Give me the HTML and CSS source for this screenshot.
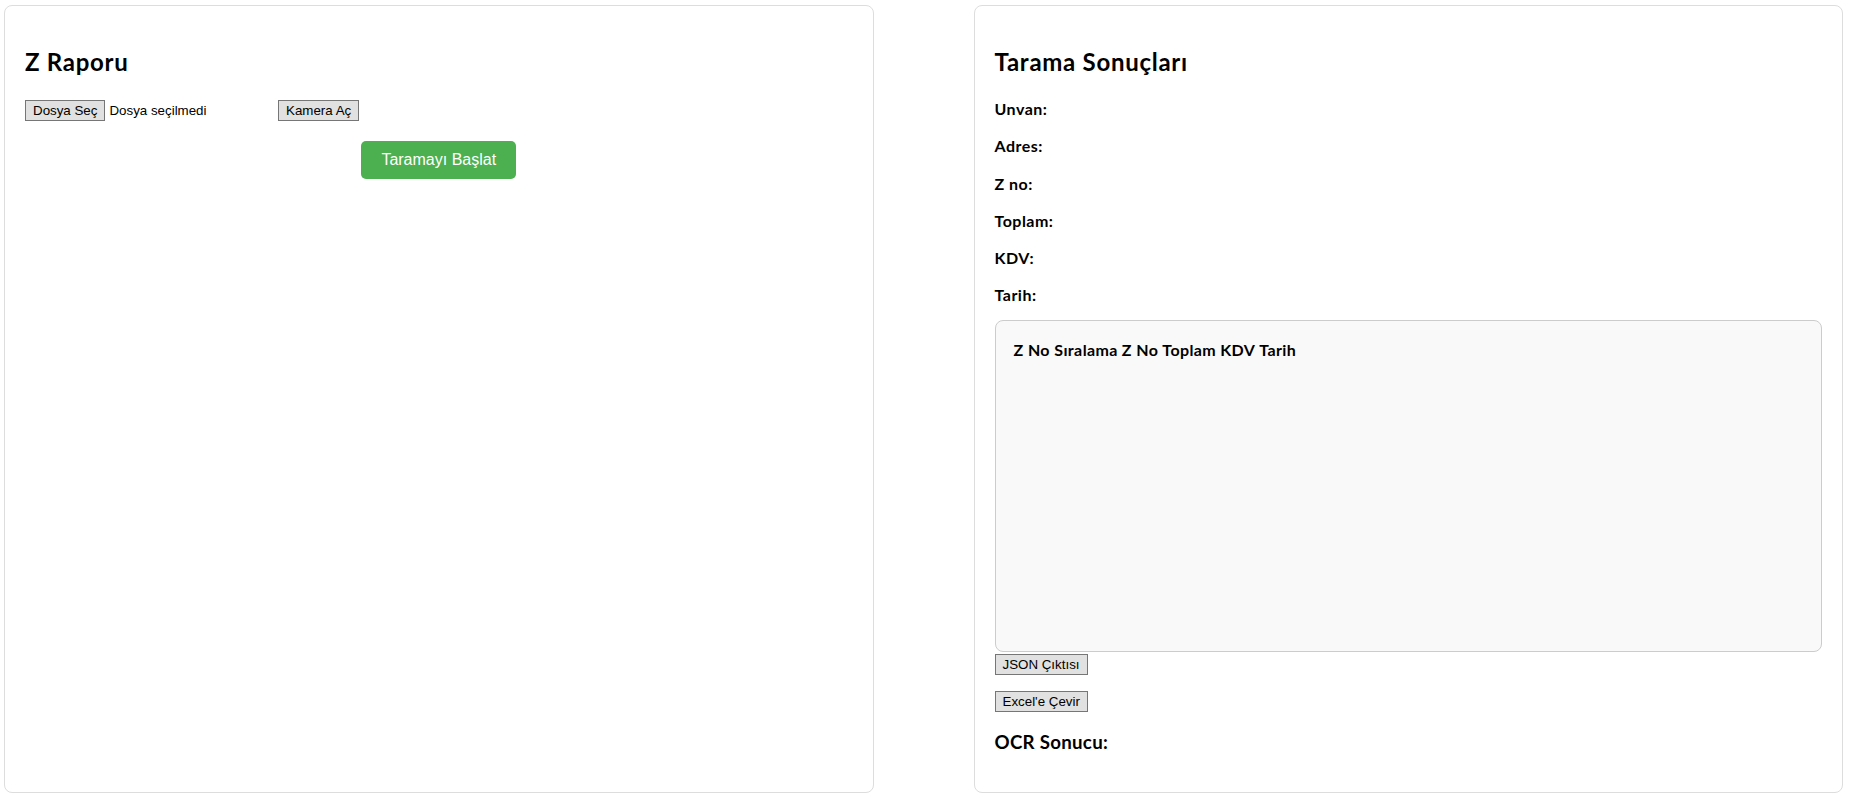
FILE: index.html
```html
<!DOCTYPE html>
<html lang="tr">
<head>
<meta charset="utf-8">
<title>Z Raporu</title>
<link rel="stylesheet" href="styles.css">
</head>
<body>
<div class="page">
  <section class="card">
    <h2 class="card-title">Z Raporu</h2>
    <div class="controls">
      <span class="file-input">
        <button class="sys-btn" type="button">Dosya Seç</button>
        <span class="file-name">Dosya seçilmedi</span>
      </span>
      <button class="sys-btn" type="button">Kamera Aç</button>
    </div>
    <button class="primary-btn" type="button">Taramayı Başlat</button>
  </section>

  <section class="card">
    <h2 class="card-title">Tarama Sonuçları</h2>
    <p class="field"><strong>Unvan:</strong></p>
    <p class="field"><strong>Adres:</strong></p>
    <p class="field"><strong>Z no:</strong></p>
    <p class="field"><strong>Toplam:</strong></p>
    <p class="field"><strong>KDV:</strong></p>
    <p class="field field-last"><strong>Tarih:</strong></p>
    <div class="table-box">
      <table class="result-table">
        <thead>
          <tr><th>Z No Sıralama</th><th>Z No</th><th>Toplam</th><th>KDV</th><th>Tarih</th></tr>
        </thead>
      </table>
    </div>
    <div class="actions">
      <button class="sys-btn" type="button">JSON Çıktısı</button>
      <button class="sys-btn" type="button">Excel'e Çevir</button>
    </div>
    <h3 class="ocr-title">OCR Sonucu:</h3>
  </section>
</div>
</body>
</html>
```

FILE: styles.css
```css
* { box-sizing: border-box; }

html, body {
  margin: 0;
  padding: 0;
  background: #ffffff;
}

body {
  font-family: "Lato", "Open Sans", sans-serif;
  font-size: 16px;
  line-height: 1.33;
  color: #000;
}

.page {
  display: flex;
  align-items: stretch;
  gap: 100px;
  padding: 5px 13px 3px 4px;
}

.card {
  flex: 1 1 0;
  min-width: 0;
  background: #fff;
  border: 1px solid #dddddd;
  border-radius: 8px;
  padding: 20px;
}

.card-title {
  font-size: 24px;
  line-height: 32px;
  font-weight: 700;
  letter-spacing: 0.03em;
  margin: 20px 0;
}

.field {
  margin: 16px 0;
  line-height: 1.33;
}

.field-last { margin-bottom: 14px; }

.field strong {
  font-weight: 700;
  letter-spacing: 0.03em;
}

.card-title + .field { margin-top: 20px; }

.controls {
  display: flex;
  align-items: center;
  gap: 4px;
  padding-top: 2px;
}

.file-input {
  display: flex;
  align-items: center;
  width: 249px;
}

.file-name {
  margin-left: 4px;
  font-family: "Liberation Sans", Arial, sans-serif;
  font-size: 13.33px;
  white-space: nowrap;
}

.sys-btn {
  appearance: none;
  font-family: "Liberation Sans", Arial, sans-serif;
  font-size: 13.33px;
  line-height: 15px;
  height: 21px;
  padding: 2px 7px;
  color: #000;
  background: #e1e1e1;
  border: 1px solid #767676;
  border-radius: 0;
  white-space: nowrap;
}

.primary-btn {
  display: block;
  margin: 20px auto 0;
  appearance: none;
  font-family: "Liberation Sans", Arial, sans-serif;
  font-size: 16px;
  line-height: 18px;
  padding: 10px 20px;
  color: #fff;
  background: #4caf50;
  border: none;
  border-radius: 5px;
}

.table-box {
  margin-top: 14px;
  height: 332px;
  padding: 15px;
  background: #f9f9f9;
  border: 1px solid #cccccc;
  border-radius: 8px;
}

.result-table {
  border-spacing: 2px;
  font-size: 16px;
}

.result-table th {
  padding: 1px;
  font-weight: 700;
  text-align: left;
  line-height: 1.33;
  letter-spacing: 0.025em;
}

.actions {
  display: flex;
  flex-direction: column;
  align-items: flex-start;
  gap: 16px;
  margin-top: 2px;
}

.ocr-title {
  font-size: 18.72px;
  line-height: 25px;
  font-weight: 700;
  letter-spacing: 0.015em;
  margin: 18px 0 17px;
}
```
